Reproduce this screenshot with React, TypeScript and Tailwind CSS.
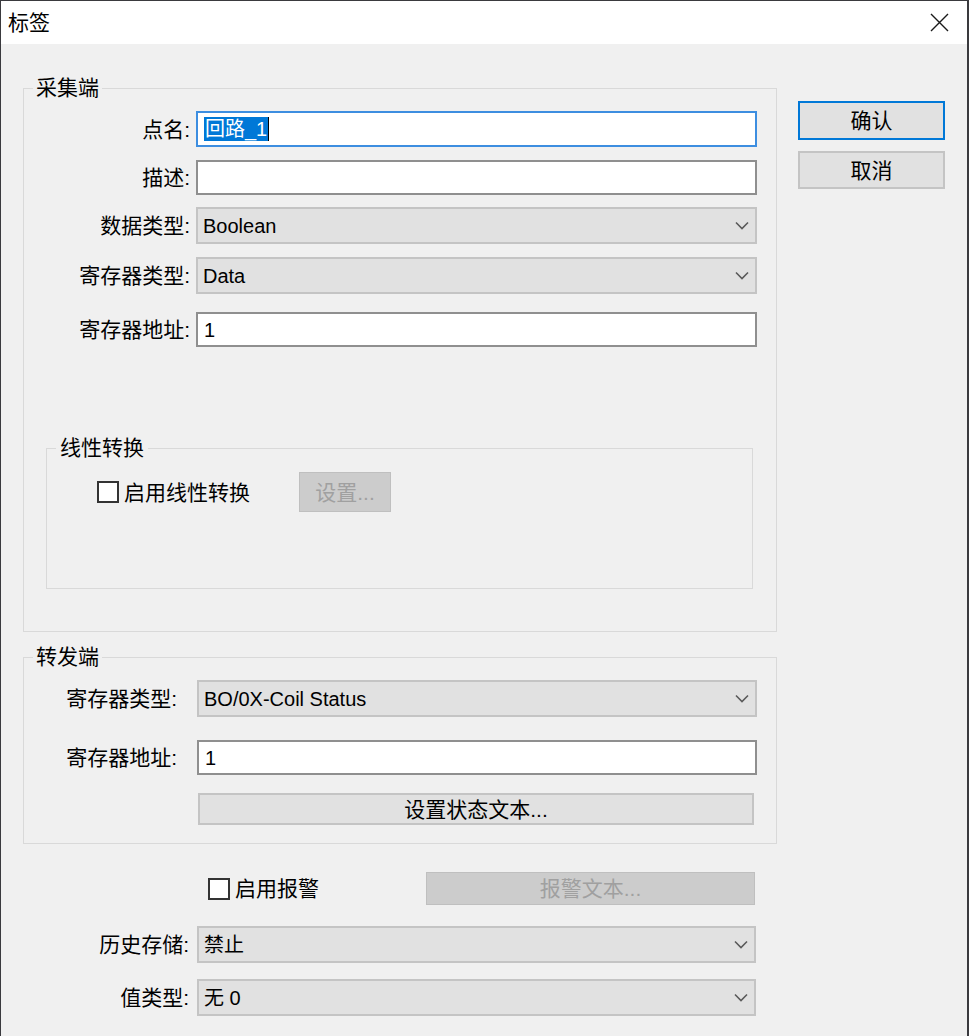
import React from "react";

const FONT = "font-['Liberation_Sans','Noto_Sans_CJK_SC',sans-serif]";

function Chevron() {
  return (
    <svg width="14" height="9" viewBox="0 0 14 9" className="shrink-0">
      <path d="M1 1.5 L7 7.5 L13 1.5" fill="none" stroke="#5a5a5a" strokeWidth="1.6" />
    </svg>
  );
}

function Combo({ value, className = "" }: { value: React.ReactNode; className?: string }) {
  return (
    <div
      className={`flex items-center justify-between h-[37px] bg-[#e1e1e1] border-2 border-[#c4c4c4] pl-[5px] pr-[6px] text-[20px] leading-none text-black ${className}`}
    >
      <span>{value}</span>
      <Chevron />
    </div>
  );
}

function TextBox({ value, className = "", focused = false }: { value?: React.ReactNode; className?: string; focused?: boolean }) {
  return (
    <div
      className={`flex items-center h-[35px] bg-white border-2 ${focused ? "border-[#3d8ee0]" : "border-[#8f8f8f]"} pl-[6px] text-[20px] leading-none text-black ${className}`}
    >
      {value}
    </div>
  );
}

function Label({ text, className = "" }: { text: string; className?: string }) {
  return <div className={`text-right text-[21px] leading-none text-black shrink-0 ${className}`}>{text}</div>;
}

function CheckBox() {
  return <div className="w-[22px] h-[22px] border-2 border-[#333333] bg-white shrink-0" />;
}

export default function App() {
  return (
    <div className={`w-[969px] h-[1036px] bg-[#3a3a3e] pt-[1px] pl-[1px] pr-[2px] overflow-hidden ${FONT}`}>
      <div className="w-full h-[1035px] bg-[#f0f0f0] flex flex-col">
        {/* Title bar */}
        <div className="h-[43px] bg-white flex items-center justify-between pl-[7px] pr-[18px] shrink-0">
          <span className="text-[21px] leading-none text-black">标签</span>
          <svg width="19" height="19" viewBox="0 0 19 19">
            <path d="M1 1 L18 18 M18 1 L1 18" stroke="#1a1a1a" strokeWidth="1.4" />
          </svg>
        </div>

        {/* Body */}
        <div className="flex pl-[22px]">
          {/* Left column */}
          <div className="w-[754px] flex flex-col">
            {/* 采集端 */}
            <fieldset className="mt-[32px] border border-[#d9d9d9] pb-[42px]">
              <legend className="ml-[9px] px-[3px] text-[21px] leading-[24px] text-black">采集端</legend>
              <div className="flex items-center mt-[11px] h-[36px]">
                <Label text="点名:" className="w-[166px]" />
                <TextBox
                  focused
                  className="ml-[6px] mr-[19px] flex-1 h-[36px]"
                  value={
                    <span className="flex items-center">
                      <span className="bg-[#0078d7] text-white px-[1px] py-[2px]">回路_1</span>
                      <span className="w-[1px] h-[24px] bg-black" />
                    </span>
                  }
                />
              </div>
              <div className="flex items-center mt-[13px] h-[35px]">
                <Label text="描述:" className="w-[166px]" />
                <TextBox className="ml-[6px] mr-[19px] flex-1" />
              </div>
              <div className="flex items-center mt-[12px] h-[37px]">
                <Label text="数据类型:" className="w-[166px]" />
                <Combo value="Boolean" className="ml-[6px] mr-[19px] flex-1" />
              </div>
              <div className="flex items-center mt-[13px] h-[37px]">
                <Label text="寄存器类型:" className="w-[166px]" />
                <Combo value="Data" className="ml-[6px] mr-[19px] flex-1" />
              </div>
              <div className="flex items-center mt-[18px] h-[35px]">
                <Label text="寄存器地址:" className="w-[166px]" />
                <TextBox value="1" className="ml-[6px] mr-[19px] flex-1" />
              </div>

              {/* 线性转换 */}
              <fieldset className="mt-[89px] ml-[22px] mr-[23px] border border-[#d9d9d9] pb-[76px]">
                <legend className="ml-[9px] px-[4px] text-[21px] leading-[24px] text-black">线性转换</legend>
                <div className="flex items-center mt-[12px] h-[40px] ml-[50px]">
                  <div className="w-[202px] flex items-center gap-[5px]">
                    <CheckBox />
                    <span className="text-[21px] leading-none text-black">启用线性转换</span>
                  </div>
                  <div className="w-[92px] h-[40px] bg-[#cccccc] border border-[#bfbfbf] flex items-center justify-center text-[21px] leading-none text-[#a0a0a0]">
                    设置...
                  </div>
                </div>
              </fieldset>
            </fieldset>

            {/* 转发端 */}
            <fieldset className="mt-[13px] border border-[#d9d9d9] pb-[18px]">
              <legend className="ml-[9px] px-[3px] text-[21px] leading-[24px] text-black">转发端</legend>
              <div className="flex items-center mt-[11px] h-[37px]">
                <Label text="寄存器类型:" className="w-[153px]" />
                <Combo value="BO/0X-Coil Status" className="ml-[20px] mr-[19px] flex-1" />
              </div>
              <div className="flex items-center mt-[23px] h-[35px]">
                <Label text="寄存器地址:" className="w-[153px]" />
                <TextBox value="1" className="ml-[20px] mr-[19px] flex-1" />
              </div>
              <div className="mt-[18px] ml-[174px] mr-[22px] h-[32px] bg-[#e1e1e1] border-2 border-[#c4c4c4] flex items-center justify-center text-[21px] leading-none text-black">
                设置状态文本...
              </div>
            </fieldset>

            {/* Alarm row */}
            <div className="flex items-center mt-[28px] h-[33px]">
              <div className="ml-[185px] w-[218px] flex items-center gap-[5px]">
                <CheckBox />
                <span className="text-[21px] leading-none text-black">启用报警</span>
              </div>
              <div className="w-[329px] h-[33px] bg-[#cccccc] border border-[#bfbfbf] flex items-center justify-center text-[21px] leading-none text-[#a0a0a0]">
                报警文本...
              </div>
            </div>

            <div className="flex items-center mt-[21px] h-[37px]">
              <Label text="历史存储:" className="w-[166px]" />
              <Combo value="禁止" className="ml-[8px] mr-[21px] flex-1" />
            </div>
            <div className="flex items-center mt-[16px] h-[37px]">
              <Label text="值类型:" className="w-[166px]" />
              <Combo value="无 0" className="ml-[8px] mr-[21px] flex-1" />
            </div>
          </div>

          {/* Right column */}
          <div className="ml-[21px] flex flex-col w-[147px]">
            <div className="mt-[57px] h-[39px] bg-[#e1e1e1] border-2 border-[#0078d7] flex items-center justify-center text-[21px] leading-none text-black">
              确认
            </div>
            <div className="mt-[11px] h-[38px] bg-[#e1e1e1] border-2 border-[#c4c4c4] flex items-center justify-center text-[21px] leading-none text-black">
              取消
            </div>
          </div>
        </div>
      </div>
    </div>
  );
}
